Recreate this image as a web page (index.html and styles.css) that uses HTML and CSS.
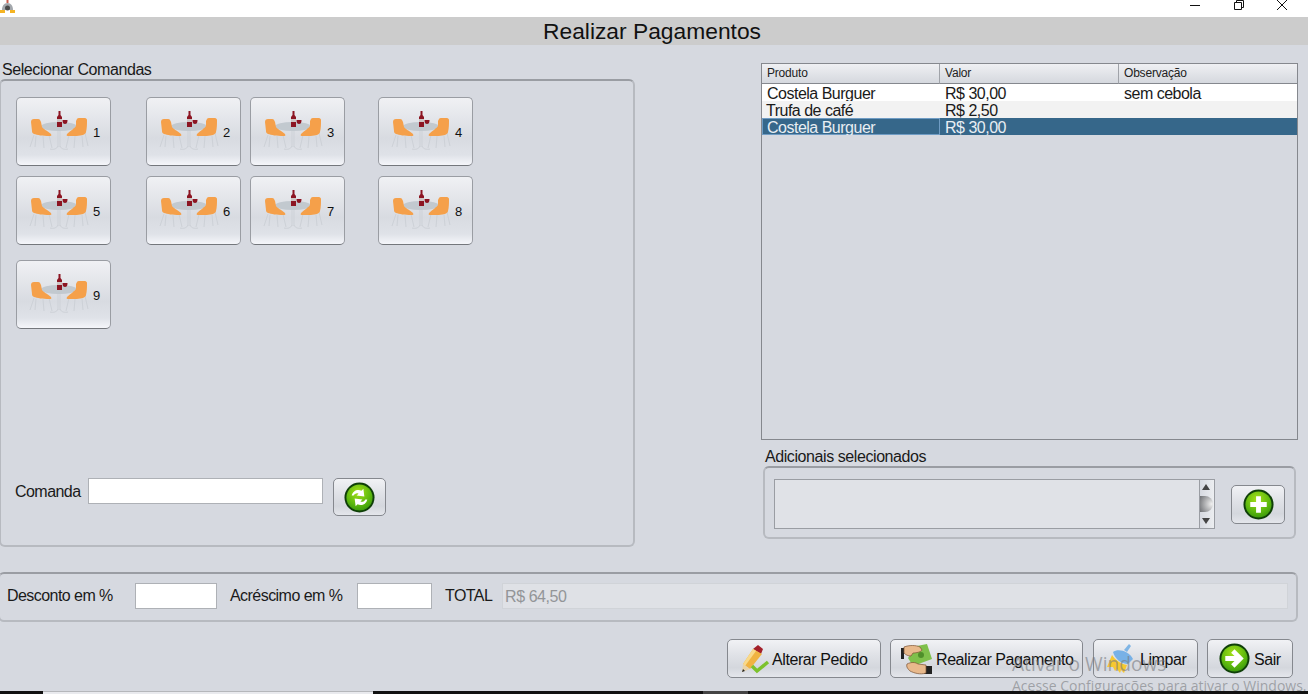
FILE: index.html
```html
<!DOCTYPE html>
<html lang="pt-BR">
<head>
<meta charset="utf-8">
<title>Realizar Pagamentos</title>
<link rel="stylesheet" href="styles.css">
</head>
<body>
<svg class="sprites" width="0" height="0" aria-hidden="true">
  <defs>
    <radialGradient id="gf" cx="0.45" cy="0.3" r="0.8"><stop offset="0" stop-color="#a6e01a"/><stop offset="0.6" stop-color="#5cb80e"/><stop offset="1" stop-color="#2f8f0a"/></radialGradient>
    <symbol id="mesa" viewBox="0 0 60 40">
      <g fill="none" stroke="#cdd1d7" stroke-width="1">
        <path d="M5 24 1 36M7 25l-1 11M14 25l1 12M20 24l3 13M40 24l-3 13M46 25l-1 12M53 25l1 11M56 22l3 13"/>
        <path d="M29 19v17M31 19v17M29 35c-1 3-5 4-8 3M31 35c1 3 5 4 8 3"/>
      </g>
      <ellipse cx="30" cy="15.5" rx="18" ry="4.5" fill="#c2c9cf"/>
      <path d="M2 11c0-2 1-3 3-3h4c2 0 2 1 3 3l1 5c1 2 6 4 9 7 1 2 0 2-2 2-6 0-12-1-15-2-2-1-2-2-2-3z" fill="#f5a04a"/>
      <path d="M58 9c0-1-1-2-2-2h-6c-2 0-2 1-3 3v5c-1 2-6 5-9 8-1 2 0 2 2 2 5 0 11 0 14-1 2-1 3-2 3-3 1-4 1-8 1-12z" fill="#f5a04a"/>
      <path d="M29.500 0h2v4l1.500 2v10h-5V6l1.500-2z" fill="#8c1522"/>
      <path d="M28 8h5v3h-5z" fill="#cfc3c3"/>
      <path d="M33.500 9h5c0 3-1 4-2.500 4s-2.500-1-2.500-4z" fill="#8c1522"/>
    </symbol>
    <symbol id="mais" viewBox="0 0 32 32">
      <circle cx="16" cy="16" r="15.500" fill="#0f3f08"/><circle cx="16" cy="16" r="13.500" fill="url(#gf)"/>
      <path d="M13.500 7.500h5v6h6v5h-6v6h-5v-6h-6v-5h6z" fill="#fff"/>
    </symbol>
    <symbol id="seta" viewBox="0 0 32 32">
      <circle cx="16" cy="16" r="15.500" fill="#0f3f08"/><circle cx="16" cy="16" r="13.500" fill="url(#gf)"/>
      <path d="M16 6.500l9.500 9.500-9.500 9.500-3.500-3.500 3.500-3.500H6.500v-5H16l-3.500-3.500z" fill="#fff"/>
    </symbol>
    <symbol id="atualizar" viewBox="0 0 32 32">
      <circle cx="16" cy="16" r="15.500" fill="#0f3f08"/><circle cx="16" cy="16" r="13.500" fill="url(#gf)"/>
      <path d="M8 14c1-5 6-7 10-5l2-2 1 8-8-1 2-2c-2-1-4 0-5 2zM24 18c-1 5-6 7-10 5l-2 2-1-8 8 1-2 2c2 1 4 0 5-2z" fill="#fff"/>
    </symbol>
  </defs>
</svg>

<div class="titlebar">
  <svg class="app-icon" width="15" height="14" viewBox="0 0 15 14"><path d="M2 10c0-4 2-7 5.500-7S13 6 13 10z" fill="#a4a8ad"/><circle cx="7.500" cy="8" r="2.500" fill="#4a4a4a"/><path d="M6.500 0h2v3h-2z" fill="#c95b4b"/><path d="M0 10h5v3H0zM10 10h5v3h-5z" fill="#f5b423"/></svg>
  <div class="win-controls">
    <svg width="10" height="10" viewBox="0 0 10 10"><path d="M0 5.500h10" stroke="#111" fill="none"/></svg>
    <svg width="10" height="10" viewBox="0 0 10 10"><path d="M.5 2.500h7v7h-7zM2.500 2.500v-2h7v7h-2" stroke="#111" fill="none"/></svg>
    <svg width="10" height="10" viewBox="0 0 10 10"><path d="M0 0l10 10M10 0 0 10" stroke="#111" fill="none"/></svg>
  </div>
</div>
<header class="page-title">Realizar Pagamentos</header>

<main class="content">
  <div class="top-row">
    <section class="left-col">
      <div class="group-label">Selecionar Comandas</div>
      <div class="panel comandas">
        <div class="mesas">
          <button class="mesa"><svg width="60" height="40"><use href="#mesa"/></svg><span>1</span></button>
          <button class="mesa"><svg width="60" height="40"><use href="#mesa"/></svg><span>2</span></button>
          <button class="mesa"><svg width="60" height="40"><use href="#mesa"/></svg><span>3</span></button>
          <button class="mesa"><svg width="60" height="40"><use href="#mesa"/></svg><span>4</span></button>
          <button class="mesa"><svg width="60" height="40"><use href="#mesa"/></svg><span>5</span></button>
          <button class="mesa"><svg width="60" height="40"><use href="#mesa"/></svg><span>6</span></button>
          <button class="mesa"><svg width="60" height="40"><use href="#mesa"/></svg><span>7</span></button>
          <button class="mesa"><svg width="60" height="40"><use href="#mesa"/></svg><span>8</span></button>
          <button class="mesa mesa-last"><svg width="60" height="40"><use href="#mesa"/></svg><span>9</span></button>
        </div>
        <div class="comanda-row">
          <label class="lbl">Comanda</label>
          <input class="field field-comanda" type="text">
          <button class="btn btn-refresh"><svg width="31" height="31"><use href="#atualizar"/></svg></button>
        </div>
      </div>
    </section>

    <section class="right-col">
      <table class="tabela">
        <thead><tr><th>Produto</th><th>Valor</th><th>Observação</th></tr></thead>
        <tbody>
          <tr><td>Costela Burguer</td><td>R$ 30,00</td><td>sem cebola</td></tr>
          <tr class="alt"><td>Trufa de café</td><td>R$ 2,50</td><td></td></tr>
          <tr class="sel"><td>Costela Burguer</td><td>R$ 30,00</td><td></td></tr>
        </tbody>
      </table>
      <div class="group-label adicionais-label">Adicionais selecionados</div>
      <div class="panel adicionais">
        <div class="textarea">
          <div class="scrollbar">
            <svg width="8" height="8" viewBox="0 0 8 8"><path d="M4 1l4 6H0z" fill="#444"/></svg>
            <span class="thumb"></span>
            <svg width="8" height="8" viewBox="0 0 8 8"><path d="M0 1h8L4 7z" fill="#444"/></svg>
          </div>
        </div>
        <button class="btn btn-add"><svg width="31" height="31"><use href="#mais"/></svg></button>
      </div>
    </section>
  </div>

  <div class="panel totais">
    <label class="lbl lbl-desc">Desconto em %</label>
    <input class="field field-desc" type="text">
    <label class="lbl lbl-acr">Acréscimo em %</label>
    <input class="field field-acr" type="text">
    <label class="lbl lbl-total">TOTAL</label>
    <div class="total-value">R$ 64,50</div>
  </div>

  <div class="actions">
    <button class="btn action a-alterar">
      <svg width="32" height="32" viewBox="0 0 32 32"><path d="M18 2l5 4-2 5-8-5z" fill="#a3202a"/><path d="M13 6l9 5-12 15-7-5z" fill="#f0b341"/><path d="M13 6l3 2-11 15-2-2z" fill="#f9d98a"/><path d="M3 21l7 5-8 3z" fill="#e9d3a8"/><path d="M2 29l1-3 2 2z" fill="#222"/><path d="M12 23l5 5 11-9" fill="none" stroke="#7cc22c" stroke-width="3.500"/></svg>
      <span>Alterar Pedido</span>
    </button>
    <button class="btn action a-realizar">
      <svg width="34" height="32" viewBox="0 0 34 32"><path d="M17 3l10-2 5 15-19 7-5-8z" fill="#7fc04b"/><circle cx="21" cy="12" r="3" fill="#4f8f2a"/><path d="M1 5h3v11H1z" fill="#222"/><path d="M4 4c5-2 12-2 16 0l2 3c-1 2-6 3-9 3l-2 3c-3 0-5-1-7-3z" fill="#e8b98c" stroke="#7a5030" stroke-width=".7"/><path d="M26 23h6v8h-8z" fill="#222"/><path d="M7 21c4-2 8-2 11 0l8 1v8c-6 2-12 0-16-2-2-2-4-4-3-7z" fill="#e8b98c" stroke="#7a5030" stroke-width=".7"/></svg>
      <span>Realizar Pagamento</span>
    </button>
    <button class="btn action a-limpar">
      <svg width="30" height="32" viewBox="0 0 30 32"><path d="M18 7 23 1l2 2-4 6z" fill="#7fb5e5"/><path d="M7 9c5-4 16-1 20 7l-5 5C15 21 9 16 7 9z" fill="#78b1e6"/><path d="M6 12c3 5 9 9 15 10l-3 8-3-3-1 3-3-4-2 2-2-4-6 0z" fill="#f7c830"/></svg>
      <span>Limpar</span>
    </button>
    <button class="btn action a-sair">
      <svg width="31" height="31"><use href="#seta"/></svg>
      <span>Sair</span>
    </button>
  </div>
</main>

<div class="watermark">
  <div class="wm-big">Ativar o Windows</div>
  <div class="wm-small">Acesse Configurações para ativar o Windows.</div>
</div>

<div class="taskbar">
  <span class="tb-a"></span><span class="tb-b"></span><span class="tb-c"></span>
</div>
</body>
</html>
```
FILE: styles.css
```css
* { box-sizing: border-box; }
html, body { margin: 0; height: 694px; overflow: hidden; }
body {
  position: relative;
  background: #d6d9e0;
  font-family: "Liberation Sans", Arial, sans-serif;
  color: #1a1a1a;
  font-size: 16px;
  letter-spacing: -0.42px;
}
.sprites { position: absolute; }
.titlebar {
  height: 17px;
  background: #fff;
  display: flex;
  justify-content: space-between;
}
.win-controls { display: flex; gap: 33.5px; padding-right: 21px; align-items: flex-start; }
.page-title {
  height: 28px;
  background: #cccccc;
  padding-right: 4px;
  text-align: center;
  font-size: 22.8px;
  letter-spacing: 0;
  line-height: 29px;
  color: #111;
}
.content { padding: 18px 10px 0 0; }
.top-row { display: flex; justify-content: space-between; height: 483px; }
.left-col { width: 635px; }
.right-col { width: 537px; }
.group-label { line-height: 14px; height: 16px; white-space: nowrap; }
.left-col .group-label { padding-left: 2px; }
.panel {
  border: 2px solid #b7bac0;
  border-top-color: #9a9da3;
  border-radius: 6px;
  background: #d6d9e0;
}
.comandas {
  height: 468px;
  margin-left: -1px;
  padding: 16px 0 0 15px;
  display: flex;
  flex-direction: column;
}
.mesas {
  display: grid;
  grid-template-columns: 130px 104px 128px 95px;
  grid-template-rows: 69px 69px 69px;
  row-gap: 10px;
  height: 232px;
  width: 460px;
}
.mesa {
  width: 95px;
  height: 69px;
  border: 1px solid #9a9da3;
  border-bottom-color: #74777c;
  border-radius: 5px;
  background: linear-gradient(#f0f1f4 0%, #d8dbe1 60%, #dfe2e8 85%, #f5f6fa 100%);
  padding: 0;
  display: flex;
  align-items: flex-start;
  font: 13px "Liberation Sans", Arial, sans-serif;
  letter-spacing: 0;
  color: #111;
}
.mesa svg { margin: 13px 0 0 12px; flex: none; }
.mesa span { margin: 28px 0 0 4px; line-height: 14px; }
.mesa-last { margin-top: 5px; }
.comanda-row {
  margin-top: 149px;
  margin-left: -1px;
  display: flex;
  align-items: flex-start;
}
.lbl { line-height: 18px; white-space: nowrap; letter-spacing: -0.55px; }
.comanda-row .lbl { width: 73px; margin-top: 5px; }
.field {
  background: #fff;
  border: 1px solid #aeb1b6;
  border-radius: 0;
  padding: 0;
  outline: none;
}
.field-comanda { width: 235px; height: 26px; }
.btn {
  border: 1px solid #85888e;
  border-radius: 5px;
  background: linear-gradient(#f1f2f5 0%, #e0e2e7 40%, #d4d7dd 75%, #e4e6eb 100%);
  padding: 0;
  display: flex;
  align-items: center;
  justify-content: center;
  font: 16px "Liberation Sans", Arial, sans-serif;
  letter-spacing: -0.42px;
  color: #111;
}
.btn-refresh { width: 53px; height: 38px; margin-left: 10px; }
.tabela {
  display: block;
  width: 537px;
  height: 377px;
  border: 1px solid #85888e;
  border-spacing: 0;
  background: #d6d9e0;
}
.tabela thead, .tabela tbody { display: block; }
.tabela tr { display: flex; }
.tabela th, .tabela td { display: block; flex: none; white-space: nowrap; overflow: hidden; text-align: left; font-weight: normal; }
.tabela th:nth-child(1), .tabela td:nth-child(1) { width: 178px; }
.tabela th:nth-child(2), .tabela td:nth-child(2) { width: 179px; }
.tabela th:nth-child(3), .tabela td:nth-child(3) { width: 178px; }
.tabela th {
  height: 20px;
  font-size: 12px;
  letter-spacing: -0.2px;
  line-height: 17px;
  padding-left: 5px;
  color: #222;
  background: linear-gradient(#eff0f3, #d5d8de);
  border-bottom: 1px solid #85888e;
  border-right: 1px solid #a0a3a9;
}
.tabela th:last-child { border-right: 0; }
.tabela td {
  height: 17px;
  font-size: 16px;
  letter-spacing: -0.5px;
  line-height: 17px;
  padding-left: 5px;
  background: #fff;
}
.tabela .alt td { background: #f2f2f2; }
.tabela .alt td:first-child { padding-left: 4px; }
.tabela .sel td { background: #36678a; color: #e8eef3; }
.tabela .sel td:first-child { box-shadow: inset 0 0 0 1px #6f9cc4; }
.tabela tr td:last-child { flex: 1; }
.adicionais-label { margin: 8px 0 0 4px; height: 18px; line-height: 18px; }
.adicionais {
  margin: 0 2px 0 2px;
  height: 73px;
  padding: 11px 9px 0 9px;
  display: flex;
  align-items: flex-start;
  gap: 16px;
}
.textarea {
  flex: none;
  width: 441px;
  height: 50px;
  background: #e0e2e7;
  border: 1px solid #9a9da3;
  display: flex;
  justify-content: flex-end;
}
.scrollbar {
  width: 15px;
  background: linear-gradient(90deg, #d6d9e0, #eceef1);
  border-left: 1px solid #9a9da3;
  display: flex;
  flex-direction: column;
  justify-content: space-between;
  align-items: flex-start;
  padding: 3px 0 3px 2px;
}
.thumb {
  width: 13px;
  height: 16px;
  margin-left: -2px;
  background: radial-gradient(circle at 90% 50%, #f0f0f0, #6d6f73);
  border-radius: 0 8px 8px 0;
}
.btn-add { flex: none; width: 54px; height: 39px; margin-top: 6px; }
.totais {
  margin-top: 26px;
  margin-left: -2px;
  height: 50px;
  display: flex;
  align-items: flex-start;
  padding-top: 9px;
}
.totais .lbl { margin-top: 4px; }
.lbl-desc { margin-left: 7px; width: 128px; }
.field-desc { width: 82px; height: 26px; }
.lbl-acr { margin-left: 13px; width: 127px; }
.field-acr { width: 75px; height: 26px; }
.lbl-total { margin-left: 13px; width: 57px; }
.total-value {
  width: 786px;
  height: 26px;
  background: #dfe1e6;
  border: 1px solid #d0d3d8;
  color: #939598;
  line-height: 26px;
  padding-left: 2px;
}
.actions {
  margin-top: 17px;
  display: flex;
  justify-content: flex-end;
  padding-right: 5px;
  gap: 9px;
}
.action { flex: none; height: 39px; justify-content: flex-start; white-space: nowrap; }
.action span { padding-top: 2px; }
.a-alterar { width: 154px; padding-left: 12px; gap: 0; }
.a-realizar { width: 193px; padding-left: 9px; gap: 2px; }
.a-limpar { width: 105px; padding-left: 12px; gap: 4px; margin-left: 1px; }
.a-sair { width: 86px; padding-left: 11px; gap: 4px; }
.watermark {
  position: absolute;
  left: 1012px;
  top: 652px;
  color: rgba(120, 122, 126, 0.6);
  letter-spacing: 0;
  white-space: nowrap;
  pointer-events: none;
}
.wm-big { font-family: "Open Sans", sans-serif; font-size: 19.1px; line-height: 25px; }
.wm-small { font-family: "Open Sans", sans-serif; font-size: 14px; line-height: 18px; }
.taskbar {
  position: absolute;
  left: 0; right: 0; bottom: 0;
  height: 3px;
  background: #111;
  display: flex;
}
.tb-a { width: 43px; }
.tb-b { width: 330px; background: #e9eaee; border-top: 1px solid #b5b7bb; }
.tb-c { width: 45px; margin-left: 330px; background: #444; }
```
